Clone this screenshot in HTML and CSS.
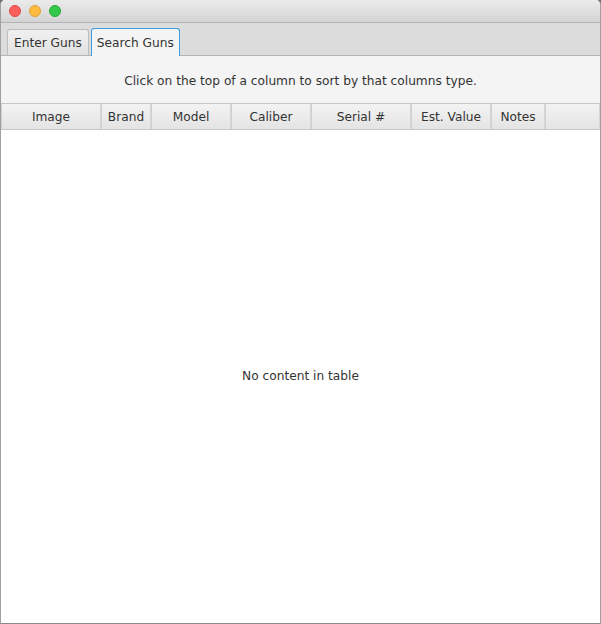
FILE: index.html
```html
<!DOCTYPE html>
<html>
<head>
<meta charset="utf-8">
<link rel="stylesheet" href="styles.css">
</head>
<body>
<div class="window">
  <div class="titlebar">
    <span class="light red"></span>
    <span class="light yellow"></span>
    <span class="light green"></span>
  </div>
  <div class="tabbar">
    <div class="tab">Enter Guns</div>
    <div class="tab selected">Search Guns</div>
  </div>
  <div class="content">
    <div class="hint">Click on the top of a column to sort by that columns type.</div>
    <div class="table">
      <div class="thead">
        <div class="th w-image">Image</div>
        <div class="th w-brand">Brand</div>
        <div class="th w-model">Model</div>
        <div class="th w-caliber">Caliber</div>
        <div class="th w-serial">Serial #</div>
        <div class="th w-value">Est. Value</div>
        <div class="th w-notes">Notes</div>
        <div class="th filler"></div>
      </div>
      <div class="tbody">No content in table</div>
    </div>
  </div>
</div>
</body>
</html>
```
FILE: styles.css
```css
html, body {
  margin: 0;
  padding: 0;
  background: #6e6e6e;
}
.window {
  width: 601px;
  height: 624px;
  box-sizing: border-box;
  display: flex;
  flex-direction: column;
  font-family: "DejaVu Sans", sans-serif;
  font-size: 12.2px;
  color: #333;
  background: #f4f4f4;
  border-left: 1px solid #a0a0a0;
  border-right: 1px solid #a0a0a0;
  border-bottom: 1px solid #8a8a8a;
  border-radius: 5px 5px 0 0;
  overflow: hidden;
}
.titlebar {
  height: 22px;
  flex: none;
  background: linear-gradient(#ebebeb, #d4d4d4);
  border-bottom: 1px solid #b3b3b3;
  display: flex;
  align-items: center;
  gap: 8px;
  padding-left: 8px;
}
.light {
  width: 12px;
  height: 12px;
  border-radius: 50%;
  box-sizing: border-box;
}
.red { background: #fc605c; border: 1px solid #de4a45; }
.yellow { background: #fdbc40; border: 1px solid #dea236; }
.green { background: #34c84a; border: 1px solid #27aa35; }
.tabbar {
  height: 33px;
  flex: none;
  background: #dcdcdc;
  border-bottom: 1px solid #b5b5b5;
  display: flex;
  align-items: flex-end;
  padding-left: 6px;
  gap: 2px;
  box-sizing: border-box;
}
.tab {
  height: 26px;
  box-sizing: border-box;
  padding: 1px 6px 0;
  display: flex;
  align-items: center;
  border: 1px solid #bdbdbd;
  border-bottom: none;
  border-radius: 3px 3px 0 0;
  background: linear-gradient(#f0f0f0, #e2e2e2);
  color: #333;
}
.tab.selected {
  height: 28px;
  padding: 1px 5px 0;
  margin-bottom: -1px;
  background: #f4f4f4;
  border-color: #3c9ce0;
  border-width: 1px 1px 0 1px;
}
.content {
  flex: 1;
  display: flex;
  flex-direction: column;
}
.hint {
  height: 47px;
  flex: none;
  display: flex;
  align-items: center;
  justify-content: center;
  padding-top: 2px;
  box-sizing: border-box;
}
.table {
  flex: 1;
  display: flex;
  flex-direction: column;
  background: #fff;
}
.thead {
  height: 27px;
  flex: none;
  display: flex;
  box-sizing: border-box;
  border-top: 1px solid #c8c8c8;
  border-bottom: 1px solid #c8c8c8;
  background: linear-gradient(#f2f2f2, #e3e3e3);
}
.th {
  box-sizing: border-box;
  display: flex;
  align-items: center;
  justify-content: center;
  padding-top: 1px;
  border-left: 1px solid #d0d0d0;
  border-right: 1px solid #d6d6d6;
  flex: none;
  background: linear-gradient(#f3f3f3, #e4e4e4);
}
.w-image { width: 100px; }
.w-brand { width: 50px; }
.w-model { width: 80px; }
.w-caliber { width: 80px; }
.w-serial { width: 100px; }
.w-value { width: 80px; }
.w-notes { width: 54px; }
.filler { flex: 1; }
.tbody {
  flex: 1;
  display: flex;
  align-items: center;
  justify-content: center;
  padding-bottom: 2px;
}
```
